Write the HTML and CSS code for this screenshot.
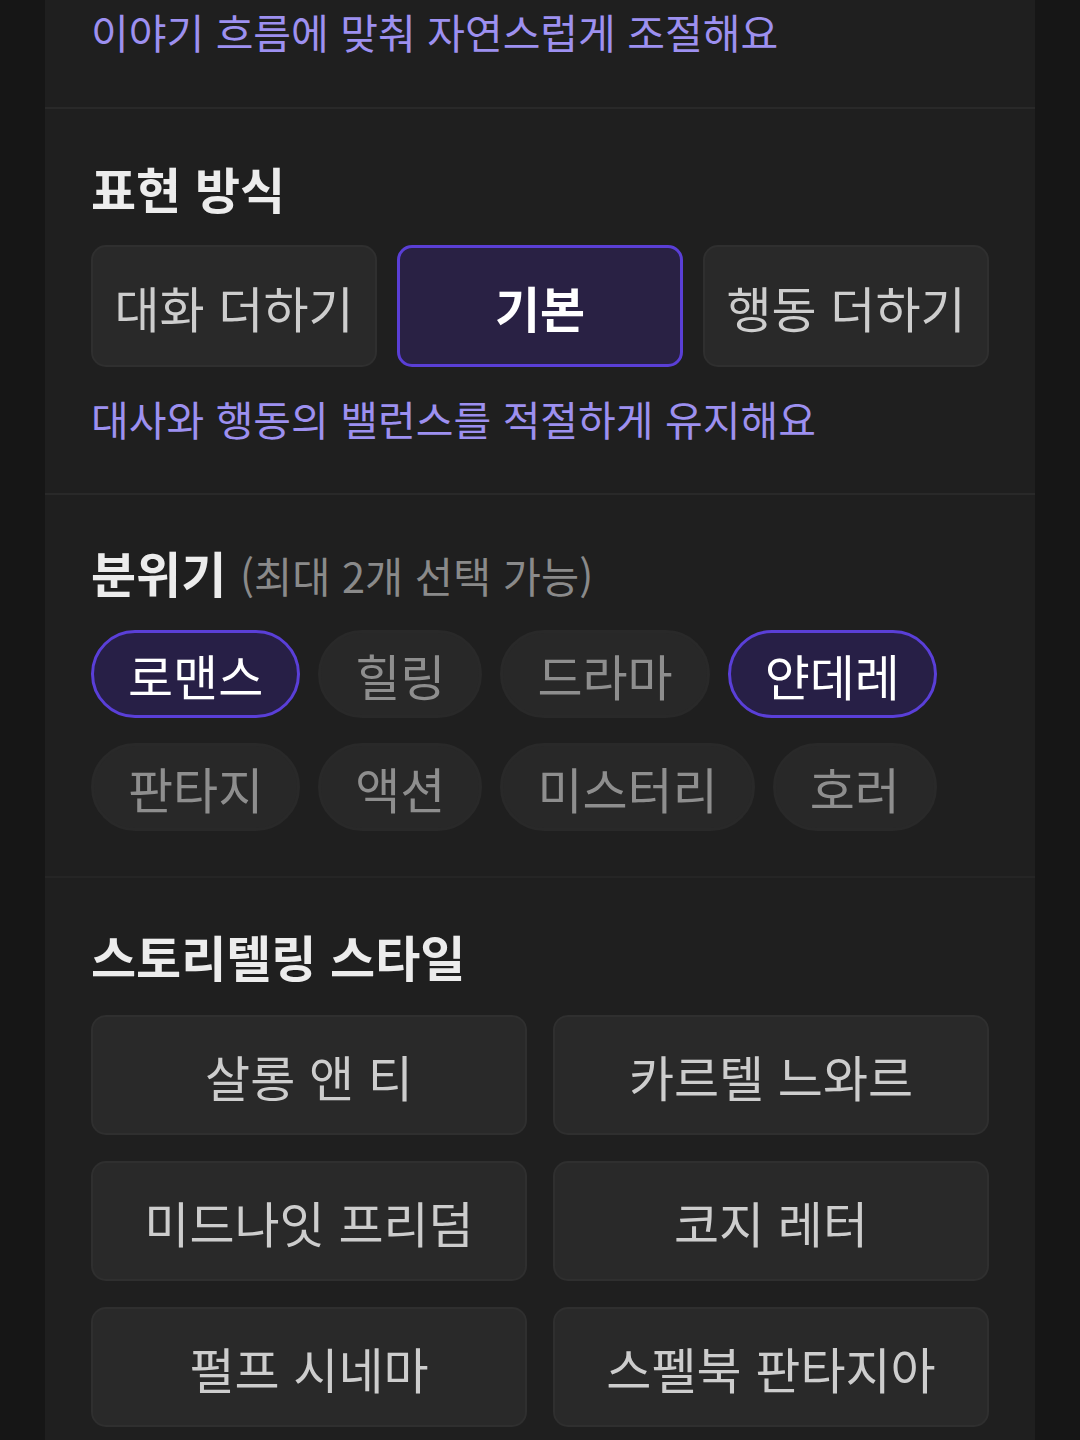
FILE: index.html
```html
<!DOCTYPE html>
<html lang="ko">
<head>
<meta charset="utf-8">
<title>설정</title>
<link rel="stylesheet" href="styles.css">
</head>
<body>
<div class="panel">
  <section class="section first">
    <p class="desc">이야기 흐름에 맞춰 자연스럽게 조절해요</p>
  </section>

  <section class="section">
    <h2 class="title">표현 방식</h2>
    <div class="seg">
      <button class="seg-btn">대화 더하기</button>
      <button class="seg-btn active">기본</button>
      <button class="seg-btn">행동 더하기</button>
    </div>
    <p class="desc after-seg">대사와 행동의 밸런스를 적절하게 유지해요</p>
  </section>

  <section class="section mood">
    <h2 class="title">분위기 <span class="sub">(최대 2개 선택 가능)</span></h2>
    <div class="chips">
      <span class="chip active">로맨스</span>
      <span class="chip">힐링</span>
      <span class="chip">드라마</span>
      <span class="chip active">얀데레</span>
      <span class="chip">판타지</span>
      <span class="chip">액션</span>
      <span class="chip">미스터리</span>
      <span class="chip">호러</span>
    </div>
  </section>

  <section class="section last">
    <h2 class="title">스토리텔링 스타일</h2>
    <div class="styles">
      <button class="style-btn">살롱 앤 티</button>
      <button class="style-btn">카르텔 느와르</button>
      <button class="style-btn">미드나잇 프리덤</button>
      <button class="style-btn">코지 레터</button>
      <button class="style-btn">펄프 시네마</button>
      <button class="style-btn">스펠북 판타지아</button>
    </div>
  </section>
</div>
</body>
</html>
```

FILE: styles.css
```css
* { box-sizing: border-box; }

html, body {
  margin: 0;
  padding: 0;
  background: #161616;
  height: 1440px;
  overflow: hidden;
}

body {
  font-family: "Noto Sans CJK KR", "Noto Sans", sans-serif;
  color: #e9e9e9;
}

.panel {
  margin-left: 45px;
  width: 990px;
  min-height: 1440px;
  background: #1f1f1f;
}

.section {
  padding: 48px 46px 48px 46px;
  border-bottom: 2px solid #292929;
}

.section.first {
  padding-top: 5px;
  padding-bottom: 49px;
}

.section.mood {
  padding-top: 46px;
  padding-bottom: 45px;
  border-bottom-color: #252525;
}

.section.last {
  padding-top: 47px;
  border-bottom: none;
}

.title {
  margin: 0;
  font-size: 49px;
  line-height: 62px;
  font-weight: 700;
  color: #ececec;
}

.sub {
  font-size: 41.5px;
  line-height: 1;
  font-weight: 400;
  color: #8a8a8a;
}

.desc {
  margin: 0;
  font-size: 41px;
  line-height: 53px;
  color: #9d90f0;
}

.after-seg {
  margin-top: 25px;
}

.seg {
  margin-top: 26px;
  display: grid;
  grid-template-columns: repeat(3, 1fr);
  column-gap: 20px;
}

.seg-btn,
.style-btn {
  font-family: inherit;
  background: #292929;
  border: 2px solid #2f2f2f;
  border-radius: 15px;
  color: #cdcdcd;
  font-size: 49px;
  font-weight: 400;
  padding: 0;
  display: flex;
  align-items: center;
  justify-content: center;
}

.seg-btn {
  height: 122px;
}

.seg-btn.active {
  background: #292144;
  border: 3px solid #5a3fd6;
  color: #ffffff;
  font-weight: 700;
}

.chips {
  margin-top: 27px;
  display: flex;
  flex-wrap: wrap;
  column-gap: 18px;
  row-gap: 25px;
  width: 880px;
}

.chip {
  height: 88px;
  padding: 0 34px;
  border-radius: 44px;
  background: #282828;
  border: 3px solid #292929;
  color: #8e8e8e;
  font-size: 49px;
  line-height: 1;
  display: inline-flex;
  align-items: center;
  justify-content: center;
}

.chip.active {
  background: #271f46;
  border-color: #5a3fd8;
  color: #ffffff;
}

.styles {
  margin-top: 28px;
  display: grid;
  grid-template-columns: 1fr 1fr;
  column-gap: 26px;
  row-gap: 26px;
}

.style-btn {
  height: 120px;
}
```
